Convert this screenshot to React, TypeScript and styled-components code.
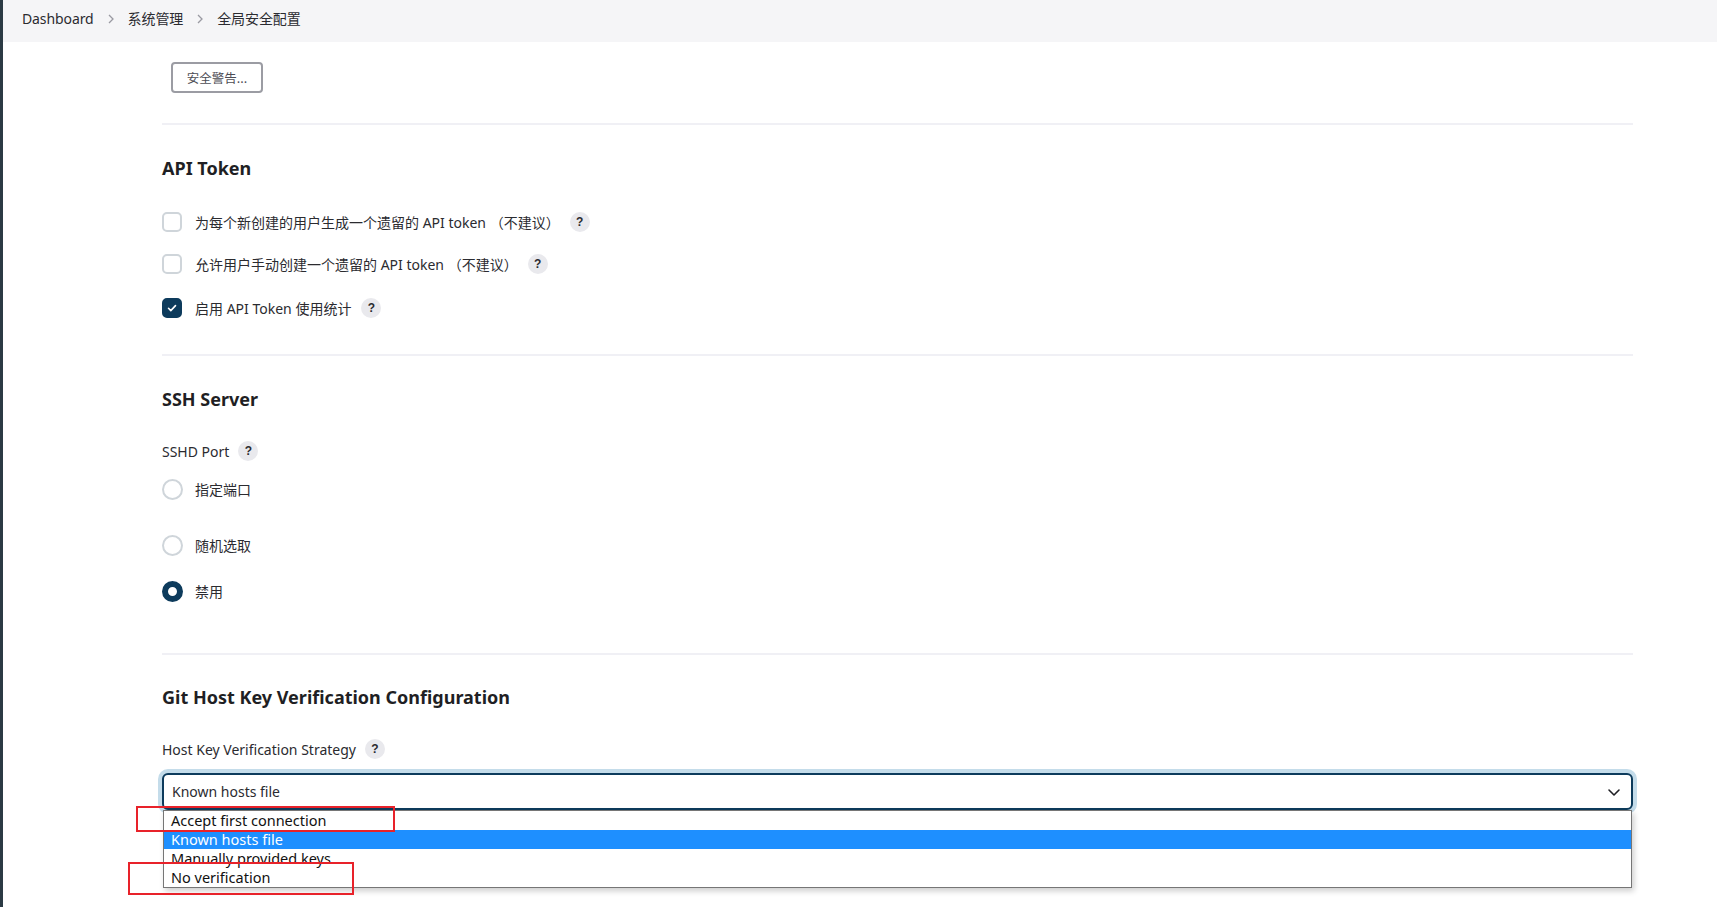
import styled, { createGlobalStyle } from "styled-components";

const GlobalStyle = createGlobalStyle`
  html, body {
    margin: 0;
    padding: 0;
    background: #fff;
  }
  body {
    font-family: "Noto Sans", "Noto Sans CJK SC", sans-serif;
    font-size: 14px;
    color: #2b2b30;
  }
`;

const NAVY = "#0d3b5c";

const Page = styled.div`
  display: flex;
  min-height: 907px;
  position: relative;
`;

const EdgeStrip = styled.div`
  width: 3px;
  flex-shrink: 0;
  background: #2b3a44;
`;

const Main = styled.div`
  flex: 1;
  display: flex;
  flex-direction: column;
`;

const Breadcrumbs = styled.nav`
  height: 42px;
  box-sizing: border-box;
  padding: 9px 0 0 19px;
  background: #f5f5f7;
  display: flex;
  align-items: flex-start;
  gap: 11px;
  font-size: 14px;
  line-height: 20px;
  color: #2b2b30;
`;

const Crumb = styled.span`
  font-family: "Noto Sans", "Noto Sans CJK SC", sans-serif;
  letter-spacing: -0.1px;
`;

const Chevron = styled.svg`
  width: 10px;
  height: 20px;
  margin: 0 1px;
`;

const Content = styled.div`
  width: 1471px;
  padding-left: 159px;
  display: flex;
  flex-direction: column;
`;

const ButtonRow = styled.div`
  padding: 20px 0 0 9px;
  display: flex;
`;

const OutlineButton = styled.button`
  height: 31px;
  width: 92px;
  border: 2px solid #9b9ca3;
  border-radius: 4px;
  background: #fff;
  color: #4d4d55;
  font-family: "Noto Sans CJK SC", sans-serif;
  font-size: 12.5px;
  padding: 0;
`;

const Divider = styled.hr<{ $top: number }>`
  border: none;
  height: 2px;
  background: #f0f0f5;
  margin: ${(p) => p.$top}px 0 0 0;
`;

const Heading = styled.h2<{ $top?: number }>`
  margin: ${(p) => p.$top ?? 31}px 0 0 0;
  font-size: 18px;
  line-height: 24px;
  font-weight: 700;
  color: #1f1f24;
`;

const OptionRow = styled.label<{ $top: number }>`
  display: flex;
  align-items: center;
  height: 20px;
  margin-top: ${(p) => p.$top}px;
  font-family: "Noto Sans", "Noto Sans CJK SC", sans-serif;
  font-size: 14px;
  color: #2b2b30;
`;

const Box = styled.span<{ $checked?: boolean }>`
  width: 20px;
  height: 20px;
  box-sizing: border-box;
  border-radius: 5px;
  border: 2px solid ${(p) => (p.$checked ? NAVY : "#cfd5da")};
  background: ${(p) => (p.$checked ? NAVY : "#fff")};
  display: flex;
  align-items: center;
  justify-content: center;
  margin-right: 13px;
  flex-shrink: 0;
`;

const Radio = styled.span<{ $checked?: boolean }>`
  width: 21px;
  height: 21px;
  box-sizing: border-box;
  border-radius: 50%;
  border: ${(p) => (p.$checked ? `6.5px solid ${NAVY}` : "2px solid #cfd5da")};
  background: #fff;
  margin-right: 12px;
  flex-shrink: 0;
`;

const Help = styled.span<{ $gap?: number }>`
  width: 20px;
  height: 20px;
  border-radius: 50%;
  background: #e9e9ed;
  color: #2b2b30;
  font-family: "Liberation Sans", sans-serif;
  font-weight: 700;
  font-size: 12px;
  display: inline-flex;
  align-items: center;
  justify-content: center;
  margin-left: ${(p) => p.$gap ?? 10}px;
  flex-shrink: 0;
`;

const FieldLabel = styled.div<{ $top: number }>`
  display: flex;
  align-items: center;
  height: 20px;
  margin-top: ${(p) => p.$top}px;
  font-size: 14px;
  color: #2b2b30;
`;

const SelectWrap = styled.div`
  position: relative;
  margin-top: 14px;
`;

const SelectBox = styled.div`
  height: 37px;
  box-sizing: border-box;
  border: 2px solid ${NAVY};
  border-radius: 6px;
  box-shadow: 0 0 0 4px #c4dcea;
  display: flex;
  align-items: center;
  justify-content: space-between;
  padding: 0 10px 0 8px;
  font-size: 14px;
  color: #2b2b30;
  background: #fff;
`;

const DropList = styled.ul`
  position: absolute;
  top: 37px;
  left: 1px;
  right: 1px;
  margin: 0;
  padding: 0;
  list-style: none;
  background: #fff;
  border: 1px solid #767676;
  box-shadow: 2px 3px 6px rgba(0, 0, 0, 0.2);
  z-index: 2;
`;

const DropItem = styled.li<{ $active?: boolean }>`
  height: 19px;
  overflow: hidden;
  padding-left: 7px;
  font-family: "Noto Sans", sans-serif;
  font-size: 14.5px;
  line-height: 18px;
  color: ${(p) => (p.$active ? "#fff" : "#111")};
  background: ${(p) => (p.$active ? "#1e8fff" : "transparent")};
`;

const Marker = styled.div<{ $x: number; $y: number; $w: number; $h: number }>`
  position: absolute;
  left: ${(p) => p.$x}px;
  top: ${(p) => p.$y}px;
  width: ${(p) => p.$w}px;
  height: ${(p) => p.$h}px;
  box-sizing: border-box;
  border: 2px solid #e8222a;
  z-index: 3;
  pointer-events: none;
`;

const Arrow = () => (
  <Chevron viewBox="0 0 10 20">
    <path d="M3 6l4 4-4 4" fill="none" stroke="#9a9aa2" strokeWidth="1.3" />
  </Chevron>
);

const Check = () => (
  <svg width="12" height="12" viewBox="0 0 12 12">
    <path d="M2.5 6.3l2.3 2.3 4.7-5" fill="none" stroke="#fff" strokeWidth="1.6" strokeLinecap="round" strokeLinejoin="round" />
  </svg>
);

const DownChevron = () => (
  <svg width="14" height="10" viewBox="0 0 14 10">
    <path d="M2 3l5 5 5-5" fill="none" stroke="#1f1f24" strokeWidth="1.6" strokeLinecap="round" strokeLinejoin="round" />
  </svg>
);

const App = () => {
  const tokenOptions = [
    { label: "为每个新创建的用户生成一个遗留的 API token （不建议）", checked: false, top: 32 },
    { label: "允许用户手动创建一个遗留的 API token （不建议）", checked: false, top: 22 },
    { label: "启用 API Token 使用统计", checked: true, top: 24 },
  ];

  const ports = [
    { label: "指定端口", checked: false, top: 18 },
    { label: "随机选取", checked: false, top: 36 },
    { label: "禁用", checked: true, top: 26 },
  ];

  const strategies = [
    "Accept first connection",
    "Known hosts file",
    "Manually provided keys",
    "No verification",
  ];

  return (
    <Page>
      <GlobalStyle />
      <EdgeStrip />
      <Main>
        <Breadcrumbs>
          <Crumb>Dashboard</Crumb>
          <Arrow />
          <Crumb>系统管理</Crumb>
          <Arrow />
          <Crumb>全局安全配置</Crumb>
        </Breadcrumbs>

        <Content>
          <ButtonRow>
            <OutlineButton>安全警告...</OutlineButton>
          </ButtonRow>

          <Divider $top={30} />
          <Heading>API Token</Heading>
          {tokenOptions.map((o) => (
            <OptionRow key={o.label} $top={o.top}>
              <Box $checked={o.checked}>{o.checked && <Check />}</Box>
              {o.label}
              <Help>?</Help>
            </OptionRow>
          ))}

          <Divider $top={36} />
          <Heading>SSH Server</Heading>
          <FieldLabel $top={30}>
            SSHD Port
            <Help $gap={9}>?</Help>
          </FieldLabel>
          {ports.map((p) => (
            <OptionRow key={p.label} $top={p.top}>
              <Radio $checked={p.checked} />
              {p.label}
            </OptionRow>
          ))}

          <Divider $top={52} />
          <Heading $top={30}>Git Host Key Verification Configuration</Heading>
          <FieldLabel $top={30}>
            Host Key Verification Strategy
            <Help $gap={9}>?</Help>
          </FieldLabel>
          <SelectWrap>
            <SelectBox>
              <span>Known hosts file</span>
              <DownChevron />
            </SelectBox>
            <DropList>
              {strategies.map((s) => (
                <DropItem key={s} $active={s === "Known hosts file"}>
                  {s}
                </DropItem>
              ))}
            </DropList>
          </SelectWrap>
        </Content>
      </Main>

      <Marker $x={136} $y={806} $w={259} $h={26} />
      <Marker $x={128} $y={862} $w={226} $h={33} />
    </Page>
  );
};

export default App;
